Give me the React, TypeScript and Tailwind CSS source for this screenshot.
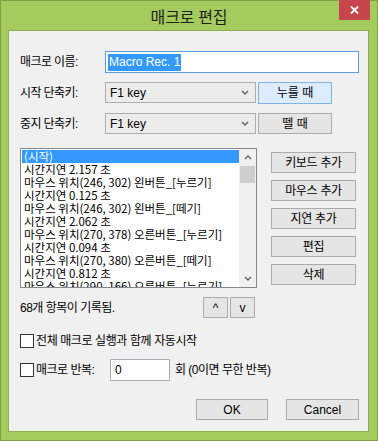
import React from "react"

const LIST_ITEMS = [
  "(시작)",
  "시간지연 2.157 초",
  "마우스 위치(246, 302) 왼버튼_[누르기]",
  "시간지연 0.125 초",
  "마우스 위치(246, 302) 왼버튼_[떼기]",
  "시간지연 2.062 초",
  "마우스 위치(270, 378) 오른버튼_[누르기]",
  "시간지연 0.094 초",
  "마우스 위치(270, 380) 오른버튼_[떼기]",
  "시간지연 0.812 초",
  "마우스 위치(290, 166) 오른버튼_[누르기]",
]

const SIDE_BUTTONS = ["키보드 추가", "마우스 추가", "지연 추가", "편집", "삭제"]

function Chevron({ up = false }: { up?: boolean }) {
  return (
    <svg width="8" height="5" viewBox="0 0 8 5">
      <polyline
        points={up ? "1,4 4,1 7,4" : "1,1 4,4 7,1"}
        fill="none"
        stroke="#606060"
        strokeWidth="1.4"
      />
    </svg>
  )
}

function Combo({ value }: { value: string }) {
  return (
    <div className="w-[151px] h-[21px] flex items-center justify-between border border-[#acacac] bg-[#ececec] pl-[4px] pr-[6px]">
      <span className="text-[12px]">{value}</span>
      <Chevron />
    </div>
  )
}

function Btn({ children, className = "" }: { children: React.ReactNode; className?: string }) {
  return (
    <div
      className={`h-[21px] flex items-center justify-center border border-[#acacac] bg-[#e5e5e5] text-[12px] ${className}`}
    >
      {children}
    </div>
  )
}

function Check() {
  return <div className="w-[14px] h-[14px] border border-[#333] bg-white shrink-0" />
}

export default function App() {
  return (
    <div className="w-[378px] h-[441px] flex flex-col bg-[#a4cb5e] border border-[#7f9f42] text-black font-['Liberation_Sans','Noto_Sans_CJK_KR',sans-serif]">
      {/* title bar */}
      <div className="relative h-[29px] flex items-center justify-center">
        <span className="text-[16px] text-[#1e1e1e] font-['Noto_Sans_CJK_KR',sans-serif]">매크로 편집</span>
        <div className="absolute top-[-1px] right-[7px] w-[31px] h-[20px] bg-[#c7464c] flex items-center justify-center">
          <svg width="9" height="8" viewBox="0 0 9 8">
            <path d="M1 0.5 L8 7.5 M8 0.5 L1 7.5" stroke="white" strokeWidth="1.8" />
          </svg>
        </div>
      </div>

      {/* client area */}
      <div className="flex-1 ml-[7px] mr-[8px] mb-[8px] border border-[#8cae4c] bg-[#f0f0f0] pl-[11px] pr-[9px] flex flex-col">
        <div className="mt-[20px] h-[22px] flex items-center">
          <span className="w-[85px] text-[12px] tracking-[-0.6px]">매크로 이름:</span>
          <div className="w-[254px] h-[22px] border border-[#5b9ee0] bg-white flex items-center pl-[2px]">
            <span className="bg-[#3399ff] text-white text-[12px] leading-[17px] px-[1px]">Macro Rec. 1</span>
          </div>
        </div>

        <div className="mt-[9px] h-[21px] flex items-center">
          <span className="w-[85px] text-[12px] tracking-[-0.6px]">시작 단축키:</span>
          <Combo value="F1 key" />
          <div className="ml-[2px] w-[74px] h-[22px] flex items-center justify-center border border-[#7eb4ea] bg-[#dcecfc] text-[12px]">
            누를 때
          </div>
        </div>

        <div className="mt-[10px] h-[21px] flex items-center">
          <span className="w-[85px] text-[12px] tracking-[-0.6px]">중지 단축키:</span>
          <Combo value="F1 key" />
          <Btn className="ml-[2px] w-[74px]">뗄 때</Btn>
        </div>

        <div className="mt-[14px] flex">
          <div className="w-[237px] h-[140px] border border-[#828790] bg-white flex overflow-hidden">
            <div className="flex-1 pl-[1px] pt-[1px] overflow-hidden">
              {LIST_ITEMS.map((item, i) => (
                <div
                  key={i}
                  className={`h-[13px] leading-[13px] text-[11.5px] pl-[2px] whitespace-nowrap font-['Noto_Sans_CJK_KR',sans-serif] ${
                    i === 0 ? "bg-[#3399ff] text-white" : ""
                  }`}
                >
                  {item}
                </div>
              ))}
            </div>
            <div className="w-[17px] bg-[#f0f0f0] flex flex-col items-center">
              <div className="h-[17px] flex items-center justify-center">
                <Chevron up />
              </div>
              <div className="w-[15px] h-[17px] bg-[#cdcdcd]" />
              <div className="flex-1" />
              <div className="h-[17px] flex items-center justify-center">
                <Chevron />
              </div>
            </div>
          </div>
          <div className="ml-[14px] w-[85px] pt-[4px] flex flex-col gap-[7px]">
            {SIDE_BUTTONS.map((b) => (
              <Btn key={b} className="w-[85px] tracking-[-0.3px]">
                {b}
              </Btn>
            ))}
          </div>
        </div>

        <div className="mt-[9px] h-[21px] flex items-center">
          <span className="w-[183px] text-[12px] tracking-[-0.5px]">68개 항목이 기록됨.</span>
          <Btn className="w-[25px]">^</Btn>
          <Btn className="ml-[2px] w-[25px]">v</Btn>
        </div>

        <div className="mt-[16px] h-[14px] flex items-center">
          <Check />
          <span className="ml-[2px] text-[12px] tracking-[-0.4px]">전체 매크로 실행과 함께 자동시작</span>
        </div>

        <div className="mt-[11px] h-[22px] flex items-center">
          <Check />
          <span className="ml-[2px] w-[74px] text-[12px] tracking-[-0.5px]">매크로 반복:</span>
          <div className="w-[60px] h-[22px] border border-[#abadb3] bg-white flex items-center pl-[4px] text-[12px]">
            0
          </div>
          <span className="ml-[5px] text-[12px] tracking-[-0.5px]">회 (0이면 무한 반복)</span>
        </div>

        <div className="mt-[18px] flex justify-end">
          <Btn className="w-[72px] border-[#3c8fdc]">OK</Btn>
          <Btn className="ml-[18px] w-[73px]">Cancel</Btn>
        </div>
      </div>
    </div>
  )
}
